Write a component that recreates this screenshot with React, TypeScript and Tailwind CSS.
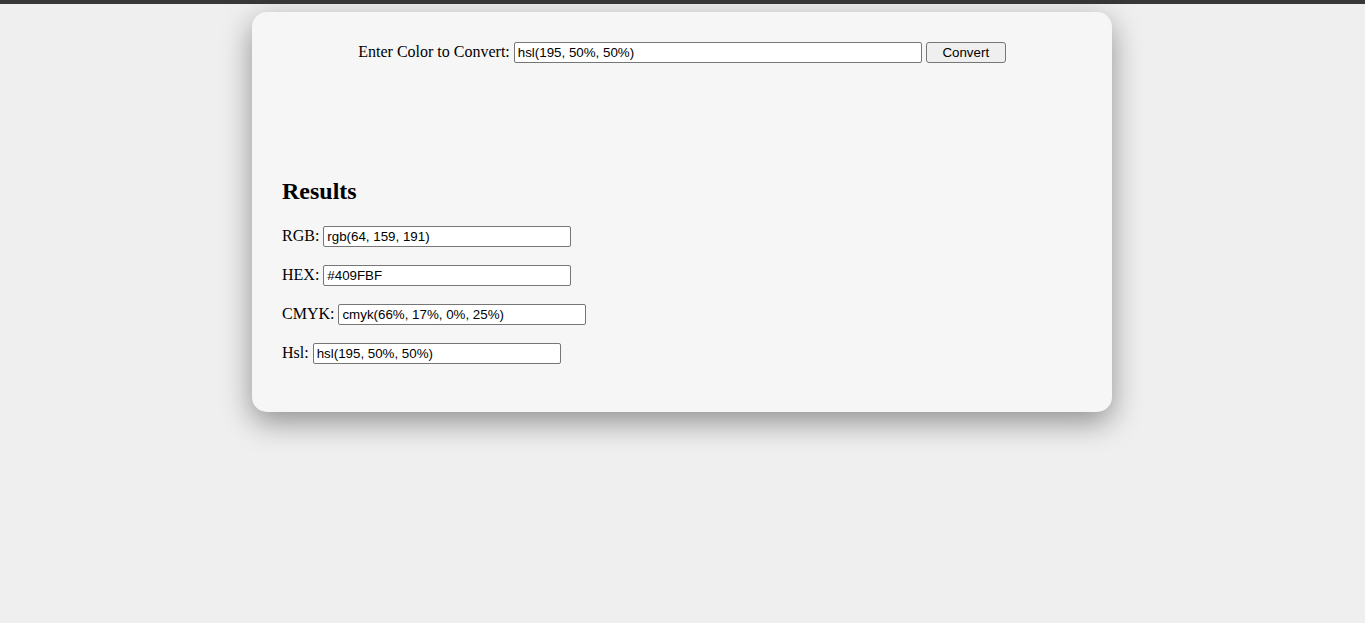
import React from "react";

const serif = { fontFamily: '"Liberation Serif", "Times New Roman", serif' };

function Row({ label, value }: { label: string; value: string }) {
  return (
    <div className="flex items-baseline h-[21px] text-[16px] text-black" style={serif}>
      <span>{label}</span>
      <input
        readOnly
        value={value}
        className="ml-[4px] w-[248px] h-[21px] border border-[#767676] rounded-[2px] bg-white px-[3px] text-[13.333px] text-black font-['Liberation_Sans',Arial,sans-serif] outline-none"
      />
    </div>
  );
}

export default function App() {
  return (
    <div className="min-h-screen bg-[#efefef]">
      <div className="h-[4px] bg-[#383838]" />
      <div className="pt-[8px] pb-[20px]">
        <div className="ml-[252px] w-[860px] bg-[#f6f6f6] rounded-[15px] shadow-[0_10px_30px_rgba(0,0,0,0.4)] pt-[28px] pb-[50px] px-[30px]">
          <div className="flex items-baseline justify-center h-[21px] text-[16px] text-black" style={serif}>
            <span>Enter Color to Convert:</span>
            <input
              readOnly
              value="hsl(195, 50%, 50%)"
              className="ml-[4px] w-[408px] h-[21px] border border-[#767676] rounded-[2px] bg-white px-[3px] text-[13.333px] text-black font-['Liberation_Sans',Arial,sans-serif] outline-none"
            />
            <button className="ml-[4px] w-[80px] h-[21px] border border-[#767676] rounded-[3px] bg-[#efefef] text-[13.333px] text-black font-['Liberation_Sans',Arial,sans-serif]">
              Convert
            </button>
          </div>
          <h2
            className="mt-[116px] text-[24px] leading-[28px] font-bold text-black"
            style={serif}
          >
            Results
          </h2>
          <div className="mt-[19px] flex flex-col gap-[18px]">
            <Row label="RGB:" value="rgb(64, 159, 191)" />
            <Row label="HEX:" value="#409FBF" />
            <Row label="CMYK:" value="cmyk(66%, 17%, 0%, 25%)" />
            <Row label="Hsl:" value="hsl(195, 50%, 50%)" />
          </div>
        </div>
      </div>
    </div>
  );
}
